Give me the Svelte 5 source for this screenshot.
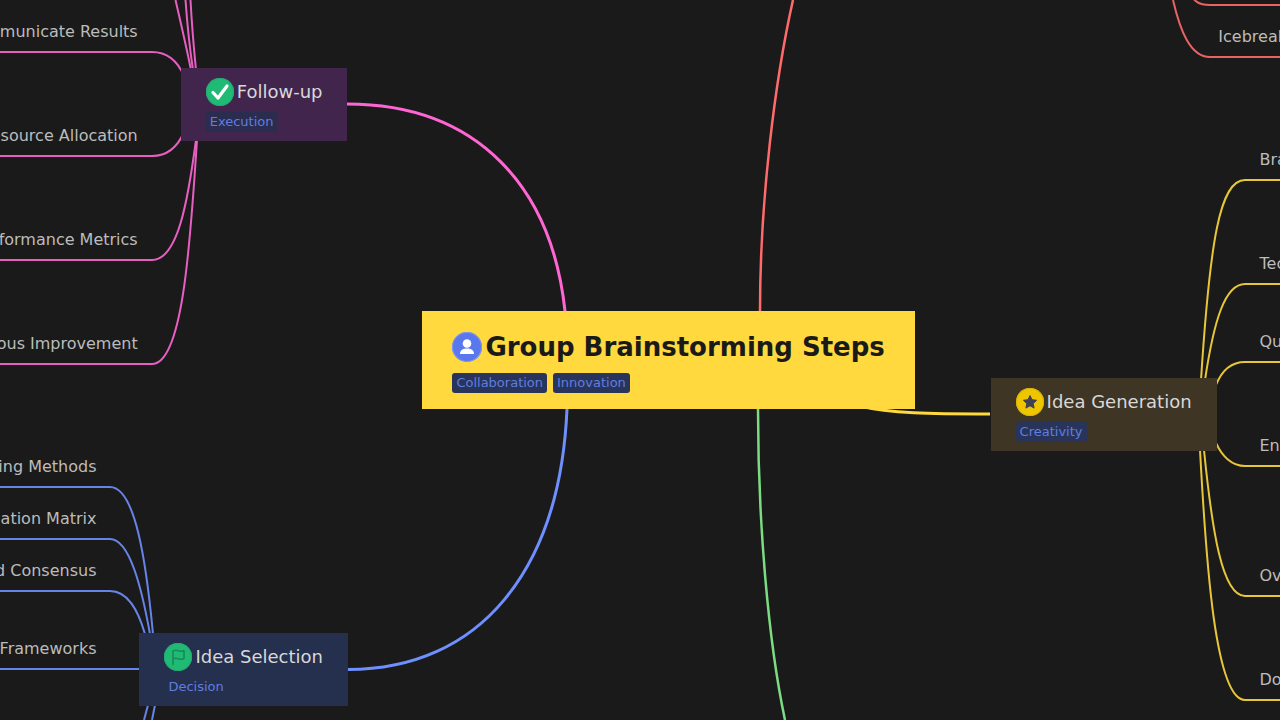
<script lang="ts">
  const pink = '#ff66d4'
  const blue = '#6f8fff'
  const red = '#ff6b6b'
  const green = '#7bdc82'
  const gold = '#ffd93d'

  const mainLinks = [
    { color: pink, width: 3, d: 'M347 104C480 104 552 190 565 311L568 360' },
    { color: blue, width: 3, d: 'M348 669.500C480 669.500 560 570 567 409L568 360' },
    { color: red, width: 2.5, d: 'M793 0C775 80 760 200 760 311' },
    { color: green, width: 2.5, d: 'M785 720C768 640 758 520 758 409' },
    { color: gold, width: 3, d: 'M860 406C890 413.500 930 414 990 414' }
  ]

  const subLinks = [
    { color: pink, d: 'M175.500 0C182 28 187 50 191 70' },
    { color: pink, d: 'M185.500 0C187.500 28 190 50 193 70' },
    { color: pink, d: 'M190.500 0C192 28 194 50 196 70' },
    { color: pink, d: 'M0 52H152C168 52 178 62 184 76' },
    { color: pink, d: 'M0 156H152C168 156 178 146 184 132' },
    { color: pink, d: 'M0 260H152C178 260 188 200 196 140' },
    { color: pink, d: 'M0 364H152C182 364 190 250 197 140' },

    { color: blue, d: 'M0 487H110C135 487 146 560 153 634' },
    { color: blue, d: 'M0 539H110C130 539 142 590 150 634' },
    { color: blue, d: 'M0 591H110C128 591 138 610 145 634' },
    { color: blue, d: 'M0 669H140' },
    { color: blue, d: 'M144 720L148 705' },
    { color: blue, d: 'M152 720L155 705' },

    { color: gold, d: 'M1280 180H1245C1220 180 1210 240 1201 380' },
    { color: gold, d: 'M1280 284H1245C1225 284 1214 320 1205 380' },
    { color: gold, d: 'M1280 362H1245C1232 362 1222 370 1216 385' },
    { color: gold, d: 'M1280 466H1245C1232 466 1222 456 1216 443' },
    { color: gold, d: 'M1280 596H1245C1222 596 1212 530 1204 450' },
    { color: gold, d: 'M1280 700H1245C1215 700 1206 560 1200 450' },

    { color: red, d: 'M1280 5H1210C1197 5 1194 0 1190 -6' },
    { color: red, d: 'M1280 57H1210C1190 57 1180 30 1173 0' }
  ]

  const leftLabels = [
    { text: 'Communicate Results', y: 22, edge: 137.7 },
    { text: 'Resource Allocation', y: 126, edge: 137.7 },
    { text: 'Performance Metrics', y: 230, edge: 137.7 },
    { text: 'Continuous Improvement', y: 334, edge: 137.7 },
    { text: 'Voting Methods', y: 457, edge: 96.5 },
    { text: 'Evaluation Matrix', y: 509, edge: 96.5 },
    { text: 'Build Consensus', y: 561, edge: 96.5 },
    { text: 'Decision Frameworks', y: 639, edge: 96.5 }
  ]

  const rightLabels = [
    { text: 'Icebreakers', x: 1218.3, y: 27 },
    { text: 'Brainstorm', x: 1259.5, y: 150 },
    { text: 'Techniques', x: 1259.5, y: 254 },
    { text: 'Quantity', x: 1259.5, y: 332 },
    { text: 'Encourage', x: 1259.5, y: 436 },
    { text: 'Overcome', x: 1259.5, y: 566 },
    { text: 'Document', x: 1259.5, y: 670 }
  ]
</script>

<main class="canvas">
  <svg class="links" width="1280" height="720" viewBox="0 0 1280 720" fill="none">
    {#each mainLinks as link}
      <path d={link.d} stroke={link.color} stroke-width={link.width} />
    {/each}
    {#each subLinks as link}
      <path d={link.d} stroke={link.color} stroke-width="2" stroke-opacity="0.9" />
    {/each}
  </svg>

  {#each leftLabels as label}
    <span class="sub" style={`right:${1280 - label.edge}px;top:${label.y}px`}>{label.text}</span>
  {/each}
  {#each rightLabels as label}
    <span class="sub" style={`left:${label.x}px;top:${label.y}px`}>{label.text}</span>
  {/each}

  <section class="node root">
    <div class="head">
      <span class="badge blue">
        <svg viewBox="0 0 30 30" width="30" height="30">
          <circle cx="15" cy="11.500" r="4.300" fill="#fff" />
          <path d="M8 22c0-4 3-5.500 7-5.500s7 1.500 7 5.500z" fill="#fff" />
        </svg>
      </span>
      <h1>Group Brainstorming Steps</h1>
    </div>
    <div class="tags">
      <span class="tag">Collaboration</span>
      <span class="tag">Innovation</span>
    </div>
  </section>

  <section class="node branch followup">
    <div class="head">
      <span class="badge green">
        <svg viewBox="0 0 28 28" width="28" height="28" fill="none">
          <path d="M7 14.500l5 5.500 9-12" stroke="#fff" stroke-width="3.200" stroke-linecap="round" stroke-linejoin="round" />
        </svg>
      </span>
      <h2>Follow-up</h2>
    </div>
    <div class="tags"><span class="tag dim">Execution</span></div>
  </section>

  <section class="node branch selection">
    <div class="head">
      <span class="badge green">
        <svg viewBox="0 0 28 28" width="28" height="28" fill="none" stroke="#1a8a58" stroke-width="1.600" stroke-linejoin="round" stroke-linecap="round">
          <path d="M9 21.500V8c3-1.500 4.500-.5 6 0s3 .5 5-.5v8c-2 1-3.500 1-5 .5s-3-1.500-6 0" />
        </svg>
      </span>
      <h2>Idea Selection</h2>
    </div>
    <div class="tags"><span class="tag flat">Decision</span></div>
  </section>

  <section class="node branch generation">
    <div class="head">
      <span class="badge gold">
        <svg viewBox="0 0 28 28" width="28" height="28">
          <path d="M14 7.500l2 4.200 4.600.6-3.400 3.200.9 4.600-4.100-2.300-4.100 2.300.9-4.600-3.400-3.200 4.600-.6z" fill="#3d4152" stroke="#3d4152" stroke-linejoin="round" />
        </svg>
      </span>
      <h2>Idea Generation</h2>
    </div>
    <div class="tags"><span class="tag">Creativity</span></div>
  </section>
</main>

<style>
  :global(body) {
    background: #1a1a1a;
  }

  .canvas {
    position: relative;
    width: 1280px;
    height: 720px;
    overflow: hidden;
    background: #1a1a1a;
    font-family: "DejaVu Sans", sans-serif;
  }

  .links {
    position: absolute;
    inset: 0;
  }

  .sub {
    position: absolute;
    font-size: 16px;
    line-height: 19px;
    color: #bcbcbc;
    white-space: nowrap;
  }

  .node {
    position: absolute;
    box-sizing: border-box;
  }

  .root {
    left: 422.4px;
    top: 311px;
    width: 492.6px;
    height: 98px;
    padding: 20px 30px;
    background: #ffd93d;
  }

  .branch {
    height: 72.7px;
    padding: 10px 25px;
  }

  .followup {
    left: 180.7px;
    top: 68px;
    width: 166.6px;
    background: #42254d;
  }

  .selection {
    left: 139.4px;
    top: 633px;
    width: 208.6px;
    background: #252f4e;
  }

  .generation {
    left: 990.6px;
    top: 378px;
    width: 226px;
    background: #3e3524;
  }

  .head {
    display: flex;
    align-items: center;
    gap: 3px;
  }

  h1,
  h2 {
    margin: 0;
    white-space: nowrap;
  }

  h1 {
    font-size: 26px;
    line-height: 32px;
    font-weight: 700;
    color: #1a1a1a;
  }

  h2 {
    font-size: 18px;
    line-height: 28px;
    font-weight: 400;
    color: #d8d8d8;
  }

  .badge {
    display: flex;
    flex: none;
    box-sizing: border-box;
    border-radius: 50%;
  }

  .root .badge {
    width: 30px;
    height: 30px;
    background: #5a78ee;
    box-shadow: inset 0 0 0 1px #8098ef;
  }

  .branch .badge {
    width: 28px;
    height: 28px;
  }

  .green {
    background: #1fbb75;
    box-shadow: inset 0 0 0 1px #2aa873;
  }

  .gold {
    background: #eec600;
    box-shadow: inset 0 0 0 1px #d8b408;
  }

  .tags {
    display: flex;
    gap: 6px;
    margin-top: 10px;
  }

  .branch .tags {
    margin-top: 6px;
  }

  .tag {
    padding: 2px 4px;
    border-radius: 3px;
    font-size: 13px;
    line-height: 16px;
    color: #5f7ee0;
    background: #28345a;
    white-space: nowrap;
  }

  .dim {
    background: #2a2c50;
  }

  .flat {
    background: transparent;
  }
</style>
